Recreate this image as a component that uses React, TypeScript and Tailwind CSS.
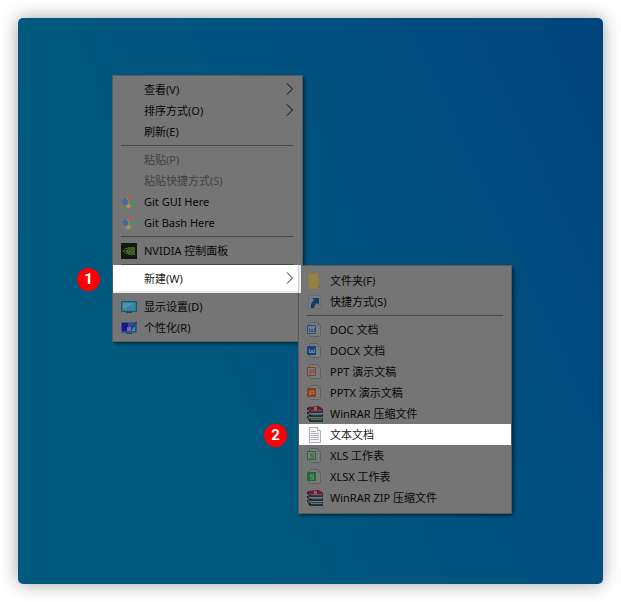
import type { ReactNode } from "react";

const svgProps = { viewBox: "0 0 16 16", "aria-hidden": true } as const;

function GitIcon() {
  return (
    <svg {...svgProps} className="size-4">
      <path d="M5 3 8 0.5 11.5 4 10 6 8 5Z" fill="#b25c58" />
      <path d="M0.5 7.5 4 4 7 6.5V9.5L4 11.5Z" fill="#4a679c" />
      <path d="M11 4.5 15 7.5 11 11.5 9.5 9.5V6.5Z" fill="#4a9350" />
      <path d="M4.5 12.5 7.5 9.8 10.5 12 7.5 14.8Z" fill="#a8984f" />
      <path d="M5.2 3.8 8.8 7.4M8 6.5v4" stroke="#8a8683" strokeWidth="1.2" />
    </svg>
  );
}

function NvidiaIcon() {
  return (
    <svg {...svgProps} className="size-4">
      <path d="M0 0h16v16H0z" fill="#0f190d" />
      <path d="M7 4h7v8H7z" fill="#3a5f25" />
      <path d="M2 8q5-6 10 0-5 5-10 0Z" fill="#17270f" stroke="#456f2c" />
      <path d="M5 8q3-3 5 0-2 3-5 0Z" fill="#2b4a1c" stroke="#59813f" />
    </svg>
  );
}

function DisplayIcon() {
  return (
    <svg {...svgProps} className="size-4">
      <path d="M.5 2.5h15v10H.5z" fill="#287b9c" stroke="#1a566e" />
      <path d="M2 4h12v7H2z" fill="#3984a2" />
      <path d="M2 4h11L3 10H2z" fill="#5093aa" />
      <path d="M5 13.5h6" stroke="#33464e" />
    </svg>
  );
}

function PersonalizeIcon() {
  return (
    <svg {...svgProps} className="size-4">
      <path d="M.5 2.5h15v10H.5z" fill="#264da0" stroke="#2c6180" />
      <path d="M1 3h6v8H1z" fill="#24128a" />
      <path d="M6 7h4v4H6z" fill="#8062a4" />
      <path d="M11 7h3v4h-3z" fill="#3d91a0" />
      <path d="m10 8 5-7 1 1-4 7Z" fill="#2d4a46" />
      <path d="M5 13.5h6" stroke="#334a50" />
    </svg>
  );
}

function FolderIcon() {
  return (
    <svg {...svgProps} className="size-4">
      <path d="M1 0h11v11l1 1v4H1z" fill="#8d7a40" />
      <path d="M2 1h9v14H2z" fill="#948148" />
      <path d="M11 12h2v3h-2z" fill="#7c6a36" />
    </svg>
  );
}

function ShortcutIcon() {
  return (
    <svg {...svgProps} className="size-4">
      <path d="M1.5 1.5h12v13h-12z" fill="#777b7f" stroke="#696d70" />
      <path d="M5 4h7v7l-2-2q-3 2-3 5H4q-1-5 3-8Z" fill="#173c63" />
    </svg>
  );
}

type Letter = "W" | "P" | "S";

const glyphs: Record<Letter, string> = {
  W: "M2.5 6v3.5h2V7.5h1v2h2V6",
  P: "M3 10.5V6h4v2.5H3.5",
  S: "M7 5.8H3.5v2H6.5v2.2H3",
};

function OfficeIcon({ color, letter, solid }: { color: string; letter: Letter; solid?: boolean }) {
  return (
    <svg {...svgProps} className="size-4">
      <path
        d="M2.5 3V1.5l1-1h7l3 3v10l-1 1h-9l-1-1V12"
        fill="#7a7b7c"
        stroke="#5a5d60"
        strokeWidth=".9"
      />
      <path d="M10.5.5v3h3" fill="none" stroke="#66696c" strokeWidth=".8" />
      <path d="M.5 3.5h8v8h-8z" fill={solid ? color : "#777d82"} stroke={color} />
      <path d={glyphs[letter]} fill="none" stroke={solid ? "#8f8f8f" : color} strokeWidth=".9" />
    </svg>
  );
}

function WinrarIcon() {
  return (
    <svg {...svgProps} className="size-4">
      <path d="M1 1 12 0l4 3v2H3L1 4Z" fill="#6c1547" />
      <path d="m1 6 2 2h13v2H3L1 9Z" fill="#174986" />
      <path d="m1 10 2 2h13v2H3l-2-1Z" fill="#125844" />
      <path d="m0 2 3 4h13M0 6l3 4h13M0 10l3 5h13" stroke="#17121a" fill="none" strokeWidth="1.4" />
      <path d="M4 4.8h11M4 8.8h11M4 13.6h11" stroke="#858789" strokeWidth=".7" />
      <path d="M7 1h3v3H7z" fill="#87712e" />
      <path d="M2 3.5v1.5M2 7.5V9M2 11.5V13" stroke="#948e88" />
    </svg>
  );
}

function TextIcon() {
  return (
    <svg {...svgProps} className="size-4">
      <path d="M2.5.5h8l3 3v12h-11z" fill="#f5f6f7" stroke="#a8adb1" />
      <path d="M10.5.5v3h3" fill="#fff" stroke="#a8adb1" />
      <path d="M4 4.5h5M4 6.5h8M4 8.5h8M4 10.5h8M4 12.5h8" stroke="#b0b4b8" />
    </svg>
  );
}

function Chevron() {
  return (
    <svg viewBox="0 0 8 12" aria-hidden className="mb-0.5 h-3 w-2">
      <path d="m1 .5 5.5 5.5L1 11.5" fill="none" stroke="currentColor" />
    </svg>
  );
}

type RowProps = {
  label: string;
  icon?: ReactNode;
  arrow?: boolean;
  disabled?: boolean;
  tone?: string;
};

function Row({ label, icon, arrow, disabled, tone = "text-[#060608]" }: RowProps) {
  return (
    <button
      type="button"
      role="menuitem"
      aria-haspopup={arrow ? "menu" : undefined}
      disabled={disabled}
      className={`flex h-[21px] w-full items-center gap-[7px] px-2 text-left whitespace-nowrap ${disabled ? "text-[#424242]" : tone}`}
    >
      <span className="flex size-4 shrink-0">{icon}</span>
      <span className="grow">{label}</span>
      {arrow && <Chevron />}
    </button>
  );
}

function Separator() {
  return (
    <div role="separator" className="flex h-[7px] items-center px-2">
      <div className="h-px w-full bg-[#484848]" />
    </div>
  );
}

function Badge({ children, className }: { children: ReactNode; className: string }) {
  return (
    <span
      className={`absolute flex size-[23px] items-center justify-center rounded-full bg-[#fb0007] font-['Roboto','Liberation_Sans',sans-serif] text-[15px] leading-none font-bold text-white ${className}`}
    >
      {children}
    </span>
  );
}

const menuStyle =
  "absolute border border-[#5a5a5a] bg-[#757575] shadow-[2px_2px_3px_rgba(0,0,0,0.45)]";

export default function App() {
  return (
    <div className="bg-white p-[18px] font-['Noto_Sans','Noto_Sans_CJK_SC',sans-serif] text-[11px] leading-4">
      <main className="relative h-[566px] rounded-[5px] bg-linear-[65deg,#005a7e_0%,#00587e_35%,#00507f_65%,#00447b_100%] shadow-[0_0_18px_rgba(0,0,0,0.36)]">
        <div role="menu" aria-label="桌面" className={`top-[57px] left-[94px] w-[191px] py-[3px] ${menuStyle}`}>
          <Row label="查看(V)" arrow />
          <Row label="排序方式(O)" arrow />
          <Row label="刷新(E)" />
          <Separator />
          <Row label="粘贴(P)" disabled />
          <Row label="粘贴快捷方式(S)" disabled />
          <Row label="Git GUI Here" icon={<GitIcon />} />
          <Row label="Git Bash Here" icon={<GitIcon />} />
          <Separator />
          <Row label="NVIDIA 控制面板" icon={<NvidiaIcon />} />
          <Separator />
          <div className="relative">
            <div className="absolute inset-x-0 -top-[3px] -bottom-1 border-b-2 border-[#ececec] bg-white" />
            <div className="relative">
              <Row label="新建(W)" arrow tone="text-[#202020]" />
            </div>
            <Badge className="top-0 -left-9">1</Badge>
          </div>
          <Separator />
          <Row label="显示设置(D)" icon={<DisplayIcon />} />
          <Row label="个性化(R)" icon={<PersonalizeIcon />} />
        </div>

        <div role="menu" aria-label="新建" className={`top-[247px] left-[280px] w-[214px] pt-1 pb-[5px] ${menuStyle}`}>
          <div className="absolute -top-px -left-px h-7 w-[3px] border-l border-[#cfcfcf] bg-[#ececec]" />
          <Row label="文件夹(F)" icon={<FolderIcon />} />
          <Row label="快捷方式(S)" icon={<ShortcutIcon />} />
          <Separator />
          <Row label="DOC 文档" icon={<OfficeIcon color="#24508c" letter="W" />} />
          <Row label="DOCX 文档" icon={<OfficeIcon color="#1b3f87" letter="W" solid />} />
          <Row label="PPT 演示文稿" icon={<OfficeIcon color="#8c3f24" letter="P" />} />
          <Row label="PPTX 演示文稿" icon={<OfficeIcon color="#933a16" letter="P" solid />} />
          <Row label="WinRAR 压缩文件" icon={<WinrarIcon />} />
          <div className="relative bg-white">
            <Row label="文本文档" icon={<TextIcon />} tone="text-[#202020]" />
            <Badge className="top-0 -left-[35px]">2</Badge>
          </div>
          <Row label="XLS 工作表" icon={<OfficeIcon color="#256c35" letter="S" />} />
          <Row label="XLSX 工作表" icon={<OfficeIcon color="#1d6d2e" letter="S" solid />} />
          <Row label="WinRAR ZIP 压缩文件" icon={<WinrarIcon />} />
        </div>
      </main>
    </div>
  );
}
